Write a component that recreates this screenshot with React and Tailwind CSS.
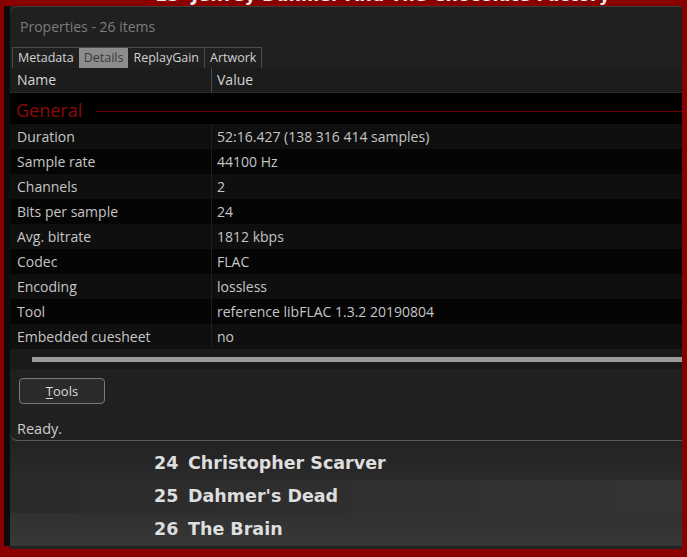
const rows = [
  ['Duration', '52:16.427 (138 316 414 samples)'],
  ['Sample rate', '44100 Hz'],
  ['Channels', '2'],
  ['Bits per sample', '24'],
  ['Avg. bitrate', '1812 kbps'],
  ['Codec', 'FLAC'],
  ['Encoding', 'lossless'],
  ['Tool', 'reference libFLAC 1.3.2 20190804'],
  ['Embedded cuesheet', 'no'],
];

const tracks = [
  ['24', 'Christopher Scarver'],
  ['25', "Dahmer's Dead"],
  ['26', 'The Brain'],
];

const tabs = ['Metadata', 'Details', 'ReplayGain', 'Artwork'];

const App = () => {
  return (
    <div
      className="w-[687px] h-[557px] bg-[#8a0000] overflow-hidden flex flex-col"
      style={{ fontFamily: '"Open Sans", "Noto Sans", sans-serif' }}
    >
      {/* peeking track title above the dialog */}
      <div className="h-[6px] overflow-hidden relative shrink-0">
        <div
          className="absolute left-[155px] top-[-15px] text-[17.5px] font-bold text-[#e8e8e8] whitespace-nowrap leading-[20px]"
          style={{ fontFamily: '"DejaVu Sans", sans-serif' }}
        >
          13&nbsp;&nbsp;Jeffrey Dahmer And The Chocolate Factory
        </div>
      </div>

      <div className="flex ml-[4px] mr-[5px] h-[540px] shrink-0">
        <div className="w-[6px] bg-[#0c0c0c]" />
        <div className="flex-1 flex flex-col bg-[#252525]">
          {/* dialog */}
          <div className="h-[435px] shrink-0 bg-[#202020] rounded-l-[8px] border-t border-t-[#3d3d3d] border-b border-b-[#5a5a5a] flex flex-col overflow-hidden">
            <div className="h-[40px] shrink-0 pl-[10px] pt-[9px] text-[14px] text-[#7c7c7c] leading-[22px]">
              Properties - 26 items
            </div>

            <div className="flex shrink-0 pl-[2px] h-[21px] text-[12.5px] leading-[20px] text-[#d2d2d2]">
              <div className="flex border-t border-l border-r border-[#4a4a4a]">
                {tabs.map((t) => (
                  <div
                    key={t}
                    className={
                      t === 'Details'
                        ? 'px-[5px] bg-[#8c8c8c] text-[#3a3a3a]'
                        : t === 'Artwork'
                        ? 'px-[5px] border-l border-[#4a4a4a]'
                        : 'px-[5px]'
                    }
                  >
                    {t}
                  </div>
                ))}
              </div>
            </div>

            <div className="flex shrink-0 h-[25px] bg-[#1c1c1c] text-[14px] leading-[24px] text-[#d4d4d4] border-b border-dotted border-[#3a3a3a]">
              <div className="w-[202px] pl-[7px] border-r border-[#4a4a4a]">Name</div>
              <div className="pl-[5px]">Value</div>
            </div>

            <div className="h-[256px] shrink-0 bg-black flex flex-col">
              <div className="h-[31px] shrink-0 flex items-center pl-[6px] pt-[3px]">
                <span className="text-[18px] text-[#8d0a0a] leading-[20px]">General</span>
                <div className="flex-1 h-px bg-[#6a0000] ml-[14px] mt-[2px]" />
              </div>
              {rows.map(([k, v], i) => (
                <div
                  key={k}
                  className={
                    'flex shrink-0 h-[25px] items-center text-[14px] text-[#c6c6c6] ' +
                    (i % 2 === 0 ? 'bg-[#0f0f0f]' : 'bg-[#050505]')
                  }
                >
                  <div className="w-[202px] pl-[7px] h-full flex items-center border-r border-[#1e1e1e]">{k}</div>
                  <div className="pl-[5px]">{v}</div>
                </div>
              ))}
            </div>

            <div className="h-[20px] shrink-0 bg-[#1a1a1a] pl-[22px] pt-[8px]">
              <div className="h-[5px] bg-[#9c9c9c]" />
            </div>

            <div className="flex-1 flex flex-col">
              <div className="pl-[9px] pt-[9px]">
                <button className="w-[86px] h-[26px] rounded-[4px] border border-[#7a7a7a] bg-[#2b2b2b] text-[13px] text-[#dcdcdc] leading-[22px]">
                  <span className="underline underline-offset-2">T</span>ools
                </button>
              </div>
              <div className="pl-[7px] pt-[15px] text-[14.5px] text-[#cdcdcd] leading-[20px]">Ready.</div>
            </div>
          </div>

          {/* background player playlist */}
          <div className="flex-1 flex flex-col bg-gradient-to-b from-[#232323] to-[#373737]">
            {tracks.map(([n, t], i) => (
              <div
                key={n}
                className={
                  'h-[33px] shrink-0 flex items-center pl-[144px] text-[17.5px] font-bold text-[#dedede] ' +
                  (i === 0 ? 'mt-[6px] ' : '') +
                  (i === 1 ? 'bg-gradient-to-r from-[#2a2a2a] to-[#343434]' : '')
                }
                style={{ fontFamily: '"DejaVu Sans", sans-serif' }}
              >
                <span className="w-[34px]">{n}</span>
                <span>{t}</span>
              </div>
            ))}
          </div>
          <div className="h-[3px] shrink-0 bg-[#222]" />
        </div>
      </div>
    </div>
  );
};

export default App;
